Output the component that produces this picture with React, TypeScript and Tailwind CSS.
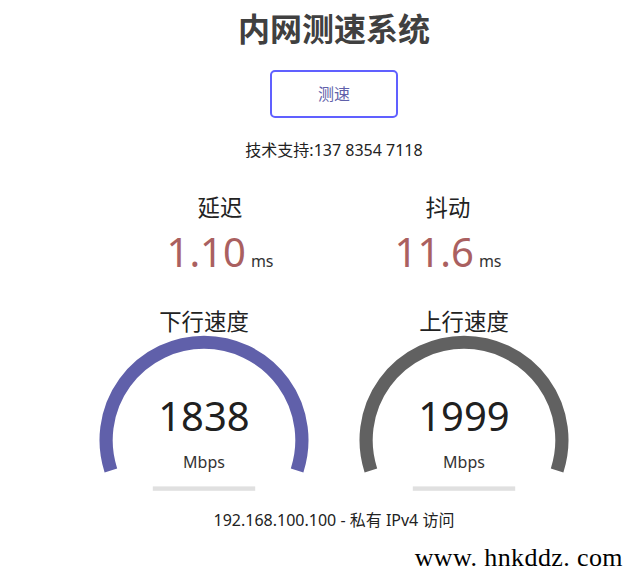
import React from "react";

const FONT = { fontFamily: '"Noto Sans", "Noto Sans CJK SC", sans-serif' };

function Gauge({ name, value, color }: { name: string; value: string; color: string }) {
  return (
    <div className="relative w-[256px] h-[200px]">
      <svg className="absolute inset-0" width="256" height="200" viewBox="0 0 256 200">
        <path
          d="M 34.9 166.45 A 97.9 97.9 0 1 1 221.1 166.45"
          fill="none"
          stroke={color}
          strokeWidth="13.2"
        />
        <rect x="76.8" y="182.4" width="102.4" height="4.4" fill="#E0E0E0" />
      </svg>
      <div className="absolute left-0 right-0 top-[7px] text-center text-[22.4px] leading-none text-[#222]">
        {name}
      </div>
      <div className="absolute left-0 right-0 top-[92px] text-center text-[40px] leading-none text-[#202020]">
        {value}
      </div>
      <div className="absolute left-0 right-0 top-[150px] text-center text-[16px] leading-none text-[#333]">
        Mbps
      </div>
    </div>
  );
}

function Latency({ name, value }: { name: string; value: string }) {
  return (
    <div className="w-[224px] flex flex-col items-center">
      <div className="text-[22.4px] leading-[30px] text-[#222]">{name}</div>
      <div className="mt-[5px] flex items-baseline">
        <span className="text-[40px] leading-[48px] text-[#AA6060]">{value}</span>
        <span className="ml-[5px] text-[16px] leading-[20px] text-[#333]">ms</span>
      </div>
    </div>
  );
}

export default function App() {
  return (
    <div className="w-[633px] h-[581px] bg-white overflow-hidden" style={FONT}>
      <div className="pl-[35px] flex flex-col items-center">
        <h1 className="mt-[9px] text-[32px] leading-[40px] font-bold text-[#404040]">内网测速系统</h1>
        <div className="mt-[21px] w-[128px] h-[48px] border-[2.4px] border-[#6060FF] rounded-[5px] flex items-center justify-center text-[16px] text-[#6060AA]">
          测速
        </div>
        <div className="mt-[20px] text-[16px] leading-[24px] text-[#222]">技术支持:137 8354 7118</div>
        <div className="mt-[31px] flex gap-[4px]">
          <Latency name="延迟" value="1.10" />
          <Latency name="抖动" value="11.6" />
        </div>
        <div className="mt-[28px] flex gap-[4px]">
          <Gauge name="下行速度" value="1838" color="#6060AA" />
          <Gauge name="上行速度" value="1999" color="#616161" />
        </div>
        <div className="mt-[4px] text-[16px] leading-[24px] text-[#222]">192.168.100.100 - 私有 IPv4 访问</div>
        <div
          className="mt-[13px] self-end mr-[10px] text-[26px] leading-none tracking-[0.4px] text-black"
          style={{ fontFamily: '"Liberation Serif", serif' }}
        >
          www. hnkddz. com
        </div>
      </div>
    </div>
  );
}
